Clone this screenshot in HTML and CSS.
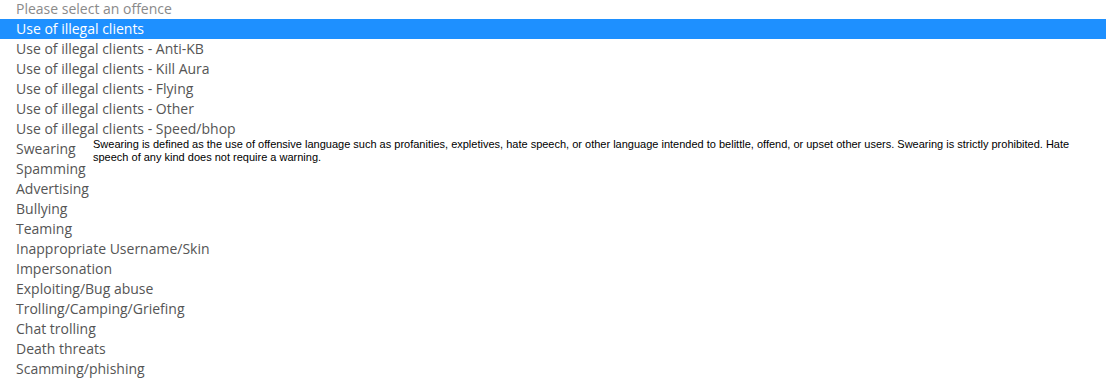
FILE: index.html
```html
<!DOCTYPE html>
<html lang="en">
<head>
<meta charset="UTF-8">
<title>Select an offence</title>
<link rel="stylesheet" href="styles.css">
</head>
<body>
<div class="offence-list">
  <div class="option placeholder">Please select an offence</div>
  <div class="option selected">Use of illegal clients</div>
  <div class="option">Use of illegal clients - Anti-KB</div>
  <div class="option">Use of illegal clients - Kill Aura</div>
  <div class="option">Use of illegal clients - Flying</div>
  <div class="option">Use of illegal clients - Other</div>
  <div class="option">Use of illegal clients - Speed/bhop</div>
  <div class="option">Swearing</div>
  <div class="option">Spamming</div>
  <div class="option">Advertising</div>
  <div class="option">Bullying</div>
  <div class="option">Teaming</div>
  <div class="option">Inappropriate Username/Skin</div>
  <div class="option">Impersonation</div>
  <div class="option">Exploiting/Bug abuse</div>
  <div class="option">Trolling/Camping/Griefing</div>
  <div class="option">Chat trolling</div>
  <div class="option">Death threats</div>
  <div class="option">Scamming/phishing</div>

  <div class="tooltip">Swearing is defined as the use of offensive language such as profanities, expletives, hate speech, or other language intended to belittle, offend, or upset other users. Swearing is strictly prohibited. Hate speech of any kind does not require a warning.</div>
</div>
</body>
</html>
```

FILE: styles.css
```css
body {
  margin: 0;
  background-color: #ffffff;
  font-family: 'Open Sans', sans-serif;
  overflow: hidden;
}

.offence-list {
  position: relative;
  margin-top: -1px;
}

.option {
  height: 20px;
  line-height: 20px;
  padding-left: 16px;
  font-size: 14px;
  color: #555555;
  white-space: nowrap;
}

.placeholder {
  color: #8a8a8a;
}

.selected {
  background-color: #1e90ff;
  color: #ffffff;
}

.tooltip {
  position: absolute;
  top: 139px;
  left: 93px;
  width: 985px;
  font-family: 'Liberation Sans', Arial, sans-serif;
  font-size: 11px;
  line-height: 13px;
  color: #000000;
}
```
